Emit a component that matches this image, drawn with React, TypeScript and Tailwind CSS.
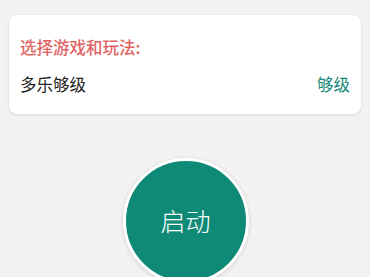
export default function App() {
  return (
    <div
      className="h-[277px] w-[370px] overflow-hidden bg-[#f2f2f2]"
      style={{ fontFamily: '"Noto Sans CJK SC", "Noto Sans", sans-serif' }}
    >
      <div className="mx-[9px] mt-[15px] h-[99px] rounded-lg bg-white px-[11px] pt-[20px] shadow-[0_1px_3px_rgba(0,0,0,0.12)]">
        <div className="text-[16.5px] leading-[24px] font-medium text-[#e06464]">选择游戏和玩法:</div>
        <div className="mt-[13px] flex items-center justify-between text-[16.5px] leading-[24px]">
          <span className="text-[#222222]">多乐够级</span>
          <span className="text-[#178878]">够级</span>
        </div>
      </div>
      <div className="mt-[44px] flex justify-center">
        <div className="ml-[1px] flex h-[126px] w-[126px] items-center justify-center rounded-full border-[3px] border-white bg-[#0f8a76] shadow-[0_1px_4px_rgba(0,0,0,0.15)]">
          <span className="text-[25px] font-light text-white">启动</span>
        </div>
      </div>
    </div>
  );
}
